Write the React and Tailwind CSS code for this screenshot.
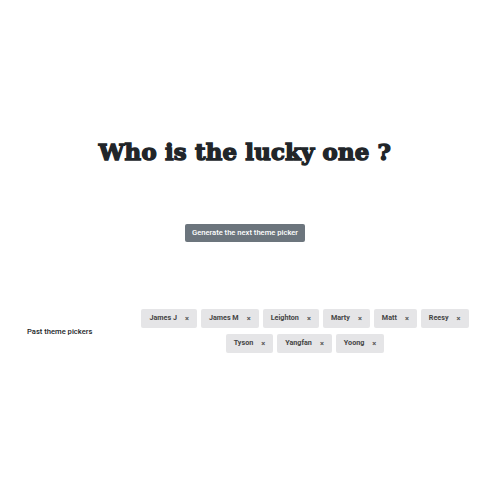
import React from "react";

const names = ["James J", "James M", "Leighton", "Marty", "Matt", "Reesy", "Tyson", "Yangfan", "Yoong"];

export default function App() {
  return (
    <div className="w-[500px] h-[500px] bg-white flex flex-col" style={{ fontFamily: "Roboto, 'Liberation Sans', sans-serif" }}>
      <h1
        className="mt-[136px] pr-[10px] text-center text-[22.8px] leading-[32px] font-bold text-[#212529] tracking-[0.2px]"
        style={{ fontFamily: "'DejaVu Serif', 'Liberation Serif', serif", WebkitTextStroke: "1.4px #212529" }}
      >
        Who is the lucky one ?
      </h1>
      <div className="flex justify-center pr-[10px] mt-[56px]">
        <button className="w-[120px] h-[18px] bg-[#6c757d] text-white text-[7.6px] font-medium rounded-[2px] flex items-center justify-center">
          Generate the next theme picker
        </button>
      </div>
      <div className="flex items-center mt-[67px]">
        <div className="w-[125px] pl-[27px] pt-[2px] text-[7.6px] text-[#212529] font-medium">Past theme pickers</div>
        <div className="w-[360px] flex flex-wrap justify-center gap-x-[4px] gap-y-[6px]">
          {names.map((n) => (
            <div key={n} className="h-[19px] bg-[#e5e5e7] rounded-[2px] flex items-center pl-[8px] pr-[8px] text-[7.2px] font-bold text-[#444]">
              <span>{n}</span>
              <span className="ml-[8px] text-[7.5px] text-[#555] font-bold">×</span>
            </div>
          ))}
        </div>
      </div>
    </div>
  );
}
